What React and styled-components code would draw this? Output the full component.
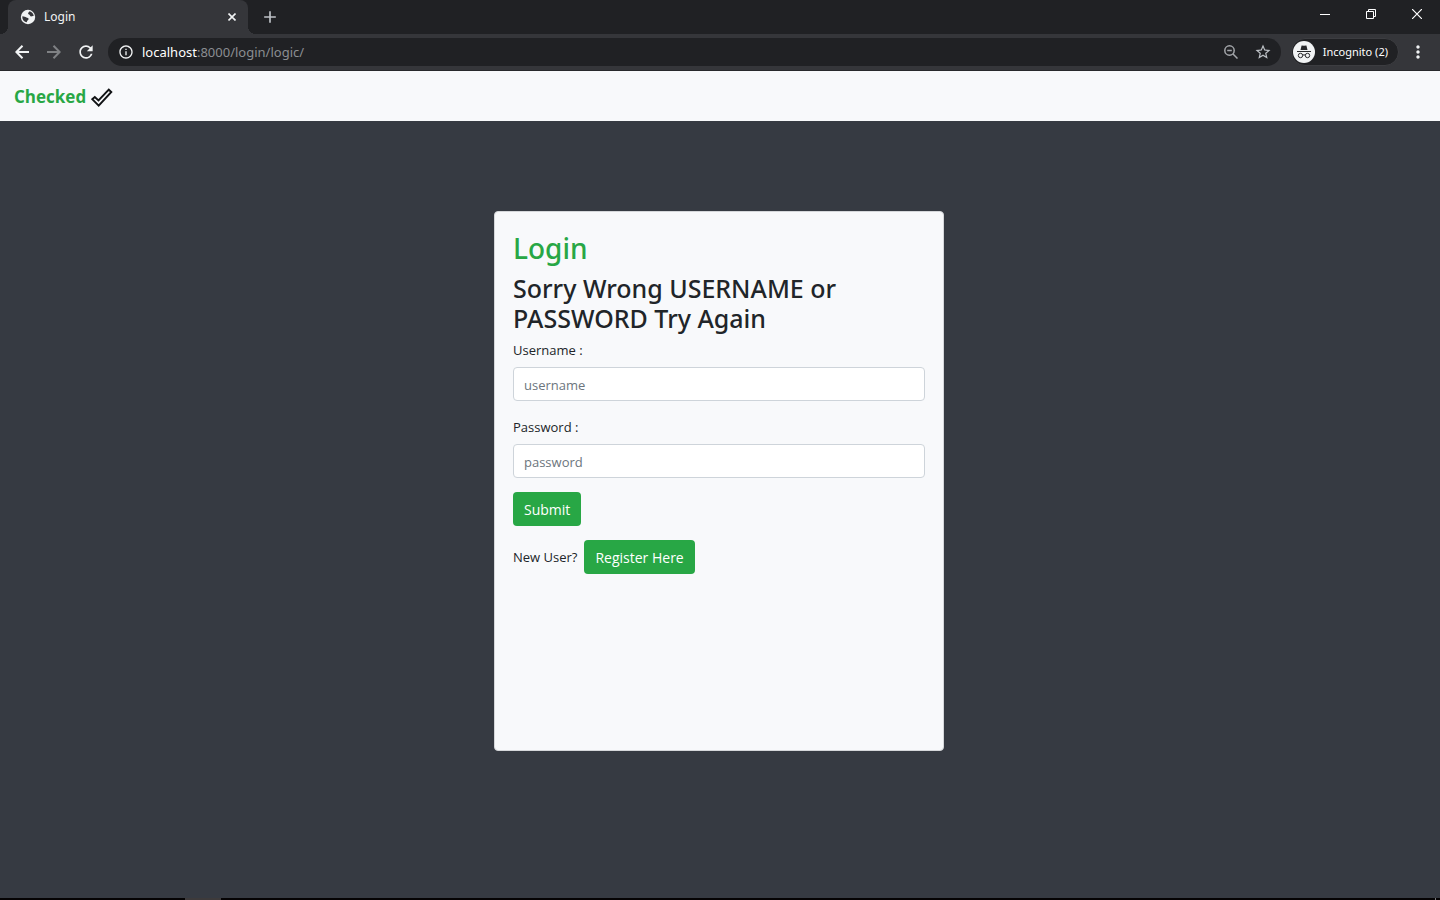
import React from "react";
import styled, { createGlobalStyle } from "styled-components";
import {
  MdAdd,
  MdInfoOutline,
  MdMoreVert,
  MdRefresh,
  MdStarBorder,
} from "react-icons/md";

const GlobalStyle = createGlobalStyle`
  *, *::before, *::after { box-sizing: border-box; }
  body {
    margin: 0;
    background: #363a42;
    color: #212529;
    font-family: "Open Sans", "Noto Sans", sans-serif;
    font-size: 14px;
    line-height: 22px;
  }
  button, input { font: inherit; }
`;

const Screen = styled.div`
  display: flex;
  flex-direction: column;
  min-height: 100vh;
`;

const TabStrip = styled.header`
  display: flex;
  height: 34px;
  padding-left: 8px;
  background: #202124;
`;

const Tab = styled.div`
  position: relative;
  display: flex;
  align-items: center;
  gap: 8px;
  width: 240px;
  padding: 0 8px 0 12px;
  border-radius: 8px 8px 0 0;
  background: #35363a;
  color: #f1f3f4;
  font-family: "Noto Sans", "Open Sans", sans-serif;
  font-size: 12px;

  &::before,
  &::after {
    content: "";
    position: absolute;
    bottom: 0;
    width: 8px;
    height: 8px;
  }
  &::before {
    left: -8px;
    background: radial-gradient(circle at 0 0, transparent 8px, #35363a 8px);
  }
  &::after {
    right: -8px;
    background: radial-gradient(circle at 100% 0, transparent 8px, #35363a 8px);
  }
`;

const TabTitle = styled.span`
  flex: 1;
`;

const IconButton = styled.button`
  display: flex;
  align-items: center;
  justify-content: center;
  flex: none;
  width: ${(p) => p.$width || 32}px;
  height: ${(p) => p.$height || 32}px;
  padding: 0;
  border: 0;
  background: none;
  color: ${(p) => p.$color || "#f1f3f4"};
`;

const WindowControls = styled.div`
  display: flex;
  margin-left: auto;
`;

const Toolbar = styled.nav`
  display: flex;
  align-items: center;
  height: 37px;
  padding: 0 6px;
  border-bottom: 1px solid #28292c;
  background: #35363a;
`;

const AddressBar = styled.div`
  display: flex;
  align-items: center;
  flex: 1;
  height: 28px;
  margin: 0 10px 0 6px;
  padding: 0 2px 0 10px;
  border-radius: 14px;
  background: #202124;
  color: #f1f3f4;
`;

const Address = styled.div`
  flex: 1;
  padding-left: 8px;
  color: #8b8e92;
  font-family: "Noto Sans", "Open Sans", sans-serif;
  font-size: 13px;
`;

const Host = styled.span`
  color: #ffffff;
`;

const Profile = styled.button`
  display: flex;
  align-items: center;
  gap: 8px;
  height: 28px;
  margin-right: 3px;
  padding: 0 10px 0 1px;
  border: 1px solid #3c3d41;
  border-radius: 14px;
  background: #202124;
  color: #ffffff;
  font-family: "Noto Sans", "Open Sans", sans-serif;
  font-size: 11px;
  white-space: nowrap;
`;

const Navbar = styled.nav`
  display: flex;
  align-items: center;
  height: 50px;
  padding: 2px 14px 0;
  background: #f8f9fb;
`;

const Brand = styled.a`
  display: flex;
  align-items: center;
  gap: 5px;
  color: #28a745;
  font-size: 17px;
  font-weight: 700;
  text-decoration: none;
`;

const Content = styled.main`
  flex: 1;
  padding: 90px 18px 90px 16px;
`;

const Card = styled.section`
  max-width: 450px;
  min-height: 540px;
  margin: 0 auto;
  padding: 18px;
  border: 1px solid #d5d7da;
  border-radius: 4px;
  background: #f8f9fb;
`;

const Title = styled.h1`
  margin: 0 0 7px;
  color: #28a745;
  font-family: "Noto Sans", "Open Sans", sans-serif;
  font-size: 28px;
  font-weight: 500;
  line-height: 36px;
`;

const Message = styled.h2`
  margin: 0 0 5px;
  font-family: "Noto Sans", "Open Sans", sans-serif;
  font-size: 25px;
  font-weight: 500;
  line-height: 30px;
`;

const Field = styled.div`
  margin-bottom: 14px;
`;

const Label = styled.label`
  display: block;
  margin-bottom: 5px;
  font-size: 13px;
  line-height: 24px;
`;

const TextInput = styled.input`
  display: block;
  width: 100%;
  height: 34px;
  padding: 2px 10px 0;
  border: 1px solid #ced4da;
  border-radius: 4px;
  background: #ffffff;
  color: #495057;
  font-size: 13px;

  &::placeholder {
    color: #6c757d;
    opacity: 1;
  }
`;

const SubmitButton = styled.button`
  display: block;
  height: 34px;
  padding: 1px 11px 0;
  border: 0;
  border-radius: 4px;
  background: #28a745;
  color: #ffffff;
`;

const RegisterRow = styled.div`
  display: flex;
  align-items: center;
  gap: 7px;
  margin-top: 14px;
  font-size: 13px;
`;

const RegisterLink = styled.a`
  height: 34px;
  padding: 0 11px;
  border-radius: 4px;
  background: #28a745;
  color: #ffffff;
  font-size: 14px;
  line-height: 36px;
  text-decoration: none;
`;

const Taskbar = styled.footer`
  display: flex;
  height: 2px;
  padding: 0 4px 0 185px;
  background: #050304;
`;

const TaskItem = styled.span`
  width: 36px;
  background: #3d3a3b;
`;

const DesktopEdge = styled.span`
  width: 1px;
  margin-left: auto;
  background: #77777a;
`;

const GlobeIcon = () => (
  <svg width="16" height="16" viewBox="0 0 16 16" fill="none" aria-hidden="true">
    <circle cx="8" cy="8" r="7.200" fill="#f1f3f4" />
    <path
      d="M2.400 7.200c1.800.2 3 .5 4 1.300 1 .7 2.200.4 2.200 1.400 0 1.200-1.600 1.200-1.800 3.400C3.800 12.800 2 10.200 2.400 7.200zM9.600 2.300c-.3 1-1.400 1-1.500 2-.1 1 .9.900 1.400 1.500.6.700.5 1.600 1.700 1.700.9 0 1.300-.5 2.500-.4C13.400 4.700 12 2.900 9.600 2.300z"
      fill="#35363a"
    />
  </svg>
);

const TabCloseIcon = () => (
  <svg width="8" height="8" viewBox="0 0 8 8" aria-hidden="true">
    <path d="M.5.5l7 7M7.500.5l-7 7" stroke="currentColor" strokeWidth="1.600" />
  </svg>
);

const BackIcon = () => (
  <svg width="14" height="14" viewBox="0 0 14 14" fill="none" stroke="currentColor" strokeWidth="2" aria-hidden="true">
    <path d="M14 7H1.500M7.500.8L1.400 7l6.100 6.200" />
  </svg>
);

const ForwardIcon = () => (
  <svg width="14" height="14" viewBox="0 0 14 14" fill="none" stroke="currentColor" strokeWidth="2" aria-hidden="true">
    <path d="M0 7h12.500M6.500.8L12.600 7l-6.100 6.200" />
  </svg>
);

const MinimizeIcon = () => (
  <svg width="10" height="10" viewBox="0 0 10 10" aria-hidden="true">
    <path d="M0 5.5h10" stroke="#fff" />
  </svg>
);

const RestoreIcon = () => (
  <svg width="10" height="10" viewBox="0 0 10 10" fill="none" stroke="#fff" aria-hidden="true">
    <path d="M.5 2.5h7v7h-7zM2.5 2.5v-2h7v7h-2" />
  </svg>
);

const CloseIcon = () => (
  <svg width="10" height="10" viewBox="0 0 10 10" aria-hidden="true">
    <path d="M0 0l10 10M10 0L0 10" stroke="#fff" strokeWidth="1.2" />
  </svg>
);

const ZoomOutIcon = () => (
  <svg width="14" height="14" viewBox="0 0 14 14" fill="none" stroke="currentColor" strokeWidth="1.5" aria-hidden="true">
    <circle cx="5.500" cy="5.500" r="4.700" />
    <path d="M9 9l4.500 4.500M3.200 5.500h4.600" />
  </svg>
);

const IncognitoIcon = () => (
  <svg width="22" height="22" viewBox="0 0 22 22" fill="none" aria-hidden="true">
    <circle cx="11" cy="11" r="11" fill="#f1f3f4" />
    <path d="M7.500 9L8.600 4.400l2.400.4 2.400-.4L14.500 9z" fill="#27282b" />
    <path d="M4 10.500h14" stroke="#27282b" />
    <path d="M9.500 14.200q1.500-.8 3 0" stroke="#27282b" />
    <circle cx="7.500" cy="14.500" r="2.200" stroke="#27282b" />
    <circle cx="14.500" cy="14.500" r="2.200" stroke="#27282b" />
  </svg>
);

const CheckIcon = () => (
  <svg width="22" height="20" viewBox="0 0 22 20" fill="none" aria-hidden="true">
    <path
      d="M1.200 12.200L3.800 10l3.700 3.400L17.800 2.700l2.500 2.300L7.700 18.600z"
      stroke="#101214"
      strokeWidth="1.900"
    />
  </svg>
);

export default function App() {
  return (
    <Screen>
      <GlobalStyle />
      <TabStrip>
        <Tab>
          <GlobeIcon />
          <TabTitle>Login</TabTitle>
          <IconButton $width={16} $height={16} aria-label="Close tab">
            <TabCloseIcon />
          </IconButton>
        </Tab>
        <IconButton $width={44} $height={34} $color="#bdc1c6" aria-label="New tab">
          <MdAdd size={20} />
        </IconButton>
        <WindowControls>
          <IconButton $width={46} $height={28} aria-label="Minimize">
            <MinimizeIcon />
          </IconButton>
          <IconButton $width={46} $height={28} aria-label="Restore">
            <RestoreIcon />
          </IconButton>
          <IconButton $width={46} $height={28} aria-label="Close">
            <CloseIcon />
          </IconButton>
        </WindowControls>
      </TabStrip>
      <Toolbar>
        <IconButton aria-label="Back">
          <BackIcon />
        </IconButton>
        <IconButton $color="#7f8184" aria-label="Forward">
          <ForwardIcon />
        </IconButton>
        <IconButton aria-label="Reload">
          <MdRefresh size={20} />
        </IconButton>
        <AddressBar>
          <MdInfoOutline size={16} />
          <Address>
            <Host>localhost</Host>:8000/login/logic/
          </Address>
          <IconButton $color="#a4a7ab" aria-label="Zoom out">
            <ZoomOutIcon />
          </IconButton>
          <IconButton $color="#bdc1c6" aria-label="Bookmark this page">
            <MdStarBorder size={18} />
          </IconButton>
        </AddressBar>
        <Profile>
          <IncognitoIcon />
          Incognito (2)
        </Profile>
        <IconButton aria-label="Menu">
          <MdMoreVert size={20} />
        </IconButton>
      </Toolbar>
      <Navbar>
        <Brand href="#home">
          Checked
          <CheckIcon />
        </Brand>
      </Navbar>
      <Content>
        <Card>
          <Title>Login</Title>
          <Message>Sorry Wrong USERNAME or PASSWORD Try Again</Message>
          <form onSubmit={(event) => event.preventDefault()}>
            <Field>
              <Label htmlFor="username">Username :</Label>
              <TextInput id="username" name="username" placeholder="username" />
            </Field>
            <Field>
              <Label htmlFor="password">Password :</Label>
              <TextInput id="password" name="password" type="password" placeholder="password" />
            </Field>
            <SubmitButton type="submit">Submit</SubmitButton>
          </form>
          <RegisterRow>
            New User?
            <RegisterLink href="#register">Register Here</RegisterLink>
          </RegisterRow>
        </Card>
      </Content>
      <Taskbar>
        <TaskItem />
        <DesktopEdge />
      </Taskbar>
    </Screen>
  );
}
